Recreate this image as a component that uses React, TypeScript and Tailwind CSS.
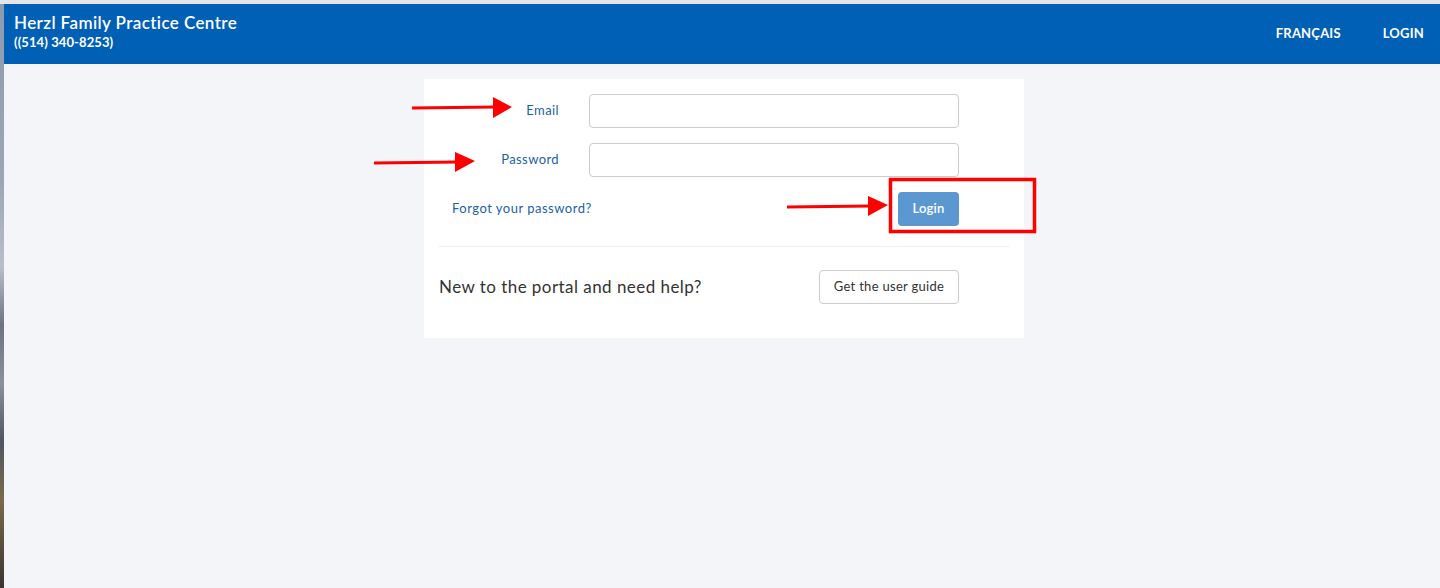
import React from 'react';

const font = { fontFamily: 'Lato, "Open Sans", "Liberation Sans", sans-serif' };

const Annotations: React.FC = () => (
  <svg className="absolute inset-0 pointer-events-none" width="1440" height="588" viewBox="0 0 1440 588">
    {/* arrow -> Email */}
    <line x1="412" y1="108" x2="496" y2="107" stroke="#ff0000" strokeWidth={3} />
    <polygon points="493,97 512,107 493,118" fill="#ff0000" />
    {/* arrow -> Password */}
    <line x1="374" y1="163" x2="458" y2="162" stroke="#ff0000" strokeWidth={3} />
    <polygon points="455,152 475,161 455,172" fill="#ff0000" />
    {/* arrow -> Login */}
    <line x1="787" y1="207" x2="871" y2="206" stroke="#ff0000" strokeWidth={3} />
    <polygon points="868,196 888,205 868,216" fill="#ff0000" />
    {/* box round Login */}
    <rect x="890.5" y="179.5" width="144" height="52" fill="none" stroke="#ff0000" strokeWidth={3.5} />
  </svg>
);

const App: React.FC = () => {
  return (
    <div className="relative w-full h-[588px] overflow-hidden bg-[#f3f5f9] flex flex-col" style={font}>
      <div className="h-1 bg-[#e4e5e7]" />
      <div className="flex flex-1">
        {/* sliver of the desktop behind the window */}
        <div className="w-[4px] bg-[linear-gradient(180deg,#8c9cb0_0%,#9aa6b4_30%,#b8bfc8_45%,#6d7480_55%,#8a919a_65%,#50565f_75%,#7a6a4a_85%,#3a3530_100%)]" />
        <div className="flex-1 flex flex-col">
          <header className="h-[60px] bg-[#0060b6] flex items-center justify-between pl-[10px] pr-[16px] text-white">
            <div className="flex flex-col leading-none pb-[5px]">
              <span className="text-[17px] font-semibold tracking-[0.4px]">Herzl Family Practice Centre</span>
              <span className="text-[13px] font-bold mt-[5px] tracking-[0.1px]">((514) 340-8253)</span>
            </div>
            <nav className="flex items-center gap-[42px] text-[13px] font-bold uppercase tracking-[0.2px]">
              <a>Français</a>
              <a>Login</a>
            </nav>
          </header>

          <main className="flex justify-center pt-[15px] pl-[4px]">
            <div className="w-[600px] bg-white px-[15px] pt-[15px] pb-[34px]">
              <div className="flex items-center h-[34px]">
                <label className="w-[120px] text-right text-[13px] text-[#1c5fa8] tracking-[0.4px]">Email</label>
                <input className="ml-[30px] w-[370px] h-[34px] rounded-[4px] border border-[#cccccc] bg-white px-3 text-[13px] outline-none" />
              </div>
              <div className="flex items-center h-[34px] mt-[15px]">
                <label className="w-[120px] text-right text-[13px] text-[#1c5fa8] tracking-[0.4px]">Password</label>
                <input type="password" className="ml-[30px] w-[370px] h-[34px] rounded-[4px] border border-[#cccccc] bg-white px-3 text-[13px] outline-none" />
              </div>
              <div className="flex items-center justify-between w-[520px] h-[34px] mt-[15px]">
                <a className="pl-[13px] text-[13px] text-[#1c5fa8] tracking-[0.5px]">Forgot your password?</a>
                <button className="w-[61px] h-[34px] rounded-[4px] bg-[#5b98d2] text-white text-[13px] font-semibold tracking-[0.2px]">Login</button>
              </div>
              <div className="mt-[20px] border-t border-[#eeeeee]" />
              <div className="flex items-center justify-between w-[520px] mt-[23px]">
                <span className="text-[17px] text-[#333333] tracking-[0.45px]">New to the portal and need help?</span>
                <button className="w-[140px] h-[34px] rounded-[4px] border border-[#cccccc] bg-white text-[13px] text-[#333333] tracking-[0.3px]">
                  Get the user guide
                </button>
              </div>
            </div>
          </main>
        </div>
      </div>
      <Annotations />
    </div>
  );
};

export default App;
